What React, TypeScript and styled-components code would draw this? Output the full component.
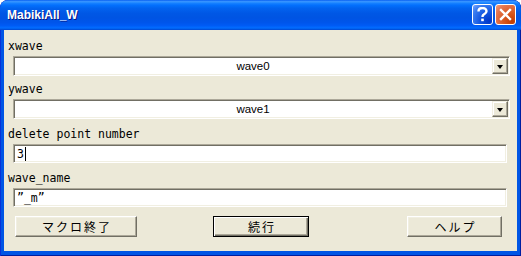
import React from 'react';
import styled, { createGlobalStyle } from 'styled-components';

const GlobalStyle = createGlobalStyle`
  html, body {
    margin: 0;
    padding: 0;
    background: #ffffff;
  }
`;

const MONO = `"DejaVu Sans Mono", "Liberation Mono", "Noto Sans CJK JP", monospace`;
const UI = `"Liberation Sans", "Noto Sans CJK JP", sans-serif`;

const Window = styled.div`
  width: 521px;
  height: 256px;
  display: flex;
  flex-direction: column;
  background: #0055e5;
  border-radius: 8px 8px 0 0;
  box-shadow: inset 1px 0 #0831d9, inset -1px 0 #001ea0, inset 0 -1px #001ea0;
  overflow: hidden;
`;

const TitleBar = styled.div`
  height: 30px;
  flex: none;
  display: flex;
  align-items: center;
  padding: 0 5px 0 7px;
  background: linear-gradient(
    to bottom,
    #0058ee 0%,
    #3a93ff 4%,
    #288eff 8%,
    #127dff 12%,
    #036ffc 18%,
    #0262ee 28%,
    #0057e5 45%,
    #0054e3 60%,
    #0055eb 75%,
    #005bf5 85%,
    #026afe 92%,
    #0062ef 96%,
    #0043cf 100%
  );
  border-radius: 8px 8px 0 0;
`;

const Title = styled.div`
  flex: 1;
  color: #ffffff;
  font-family: ${UI};
  font-weight: bold;
  font-size: 12px;
  text-shadow: 1px 1px #0a1883;
  padding-bottom: 1px;
`;

const Controls = styled.div`
  display: flex;
  gap: 2px;
  padding-bottom: 1px;
`;

const CtrlButton = styled.div<{ $kind: 'help' | 'close' }>`
  width: 21px;
  height: 21px;
  box-sizing: border-box;
  border: 1px solid #ffffff;
  border-radius: 3px;
  display: flex;
  align-items: center;
  justify-content: center;
  background: ${({ $kind }) =>
    $kind === 'close'
      ? 'radial-gradient(circle at 85% 85%, #c43c00 0%, #d85a22 40%, #e57650 75%, #f0a080 100%)'
      : 'radial-gradient(circle at 85% 85%, #0036c8 0%, #1255e0 40%, #3a7cf0 75%, #7aa6ff 100%)'};
`;

const Client = styled.div`
  flex: 1;
  margin: 0 4px 5px 4px;
  background: #ece9d8;
  display: flex;
  flex-direction: column;
  padding: 9px 0 0 4px;
`;

const Label = styled.div<{ $gap: number }>`
  margin-top: ${({ $gap }) => $gap}px;
  height: 14px;
  line-height: 14px;
  font-family: ${MONO};
  font-size: 11.5px;
  color: #000000;
`;

const Sunken = styled.div<{ $right: number; $height: number }>`
  margin: 3px ${({ $right }) => $right}px 0 5px;
  height: ${({ $height }) => $height}px;
  box-sizing: border-box;
  border: 1px solid;
  border-color: #aca899 #ffffff #ffffff #aca899;
  box-shadow: inset 1px 1px #716f64, inset -1px -1px #f1efe2;
  background: #ffffff;
  display: flex;
  align-items: center;
`;

const ComboText = styled.div`
  flex: 1;
  text-align: center;
  font-family: ${UI};
  font-size: 11.5px;
  color: #000000;
`;

const DropButton = styled.div`
  width: 16px;
  height: 16px;
  margin-right: 1px;
  box-sizing: border-box;
  background: #ece9d8;
  border: 1px solid;
  border-color: #f1efe2 #716f64 #716f64 #f1efe2;
  box-shadow: inset -1px -1px #aca899, inset 1px 1px #ffffff;
  display: flex;
  align-items: center;
  justify-content: center;
`;

const Arrow = styled.div`
  width: 0;
  height: 0;
  border-left: 3.5px solid transparent;
  border-right: 3.5px solid transparent;
  border-top: 4px solid #000000;
  margin-top: 1px;
`;

const InputText = styled.div`
  padding-left: 3px;
  font-family: ${MONO};
  font-size: 11.5px;
  color: #000000;
  display: flex;
  align-items: center;
`;

const Caret = styled.span`
  display: inline-block;
  width: 1px;
  height: 14px;
  background: #000000;
  margin-left: 1px;
`;

const ButtonRow = styled.div`
  margin: 9px 0 0 7px;
  display: flex;
  align-items: center;
`;

const PushButton = styled.div<{ $width: number; $offset: number; $default?: boolean }>`
  width: ${({ $width }) => $width}px;
  margin-left: ${({ $offset }) => $offset}px;
  height: 21px;
  box-sizing: border-box;
  background: #ece9d8;
  border: 1px solid;
  border-color: ${({ $default }) =>
    $default ? '#000000' : '#ffffff #716f64 #716f64 #ffffff'};
  box-shadow: ${({ $default }) =>
    $default
      ? 'inset 1px 1px #ffffff, inset -1px -1px #716f64, inset -2px -2px #aca899'
      : 'inset -1px -1px #aca899, inset 1px 1px #f1efe2'};
  display: flex;
  align-items: center;
  justify-content: center;
  font-family: "Noto Sans CJK JP", sans-serif;
  font-size: 12px;
  letter-spacing: 2px;
  padding-left: 2px;
  color: #000000;
`;

const Combo: React.FC<{ value: string }> = ({ value }) => (
  <Sunken $right={7} $height={20}>
    <ComboText>{value}</ComboText>
    <DropButton>
      <Arrow />
    </DropButton>
  </Sunken>
);

const TextInput: React.FC<{ value: string; focused?: boolean }> = ({
  value,
  focused,
}) => (
  <Sunken $right={10} $height={19}>
    <InputText>
      {value}
      {focused && <Caret />}
    </InputText>
  </Sunken>
);

const HelpIcon = () => (
  <svg width="11" height="15" viewBox="0 0 11 15">
    <path
      d="M1.5 4.5 C1.5 2 3.5 1 5.5 1 C8 1 9.5 2.5 9.5 4.3 C9.5 6.3 7.5 7 6.2 8 C5.6 8.5 5.5 9 5.5 10"
      fill="none"
      stroke="#ffffff"
      strokeWidth="2.4"
    />
    <rect x="4.2" y="11.6" width="2.6" height="2.6" fill="#ffffff" />
  </svg>
);

const CloseIcon = () => (
  <svg width="13" height="13" viewBox="0 0 13 13">
    <path
      d="M2 2 L11 11 M11 2 L2 11"
      stroke="#ffffff"
      strokeWidth="2.4"
      strokeLinecap="square"
    />
  </svg>
);

export default function App() {
  return (
    <>
      <GlobalStyle />
      <Window>
        <TitleBar>
          <Title>MabikiAll_W</Title>
          <Controls>
            <CtrlButton $kind="help">
              <HelpIcon />
            </CtrlButton>
            <CtrlButton $kind="close">
              <CloseIcon />
            </CtrlButton>
          </Controls>
        </TitleBar>
        <Client>
          <Label $gap={0}>xwave</Label>
          <Combo value="wave0" />
          <Label $gap={6}>ywave</Label>
          <Combo value="wave1" />
          <Label $gap={8}>delete point number</Label>
          <TextInput value="3" focused />
          <Label $gap={8}>wave_name</Label>
          <TextInput value="”_m”" />
          <ButtonRow>
            <PushButton $width={122} $offset={0}>
              マクロ終了
            </PushButton>
            <PushButton $width={96} $offset={76} $default>
              続行
            </PushButton>
            <PushButton $width={95} $offset={98}>
              ヘルプ
            </PushButton>
          </ButtonRow>
        </Client>
      </Window>
    </>
  );
}
